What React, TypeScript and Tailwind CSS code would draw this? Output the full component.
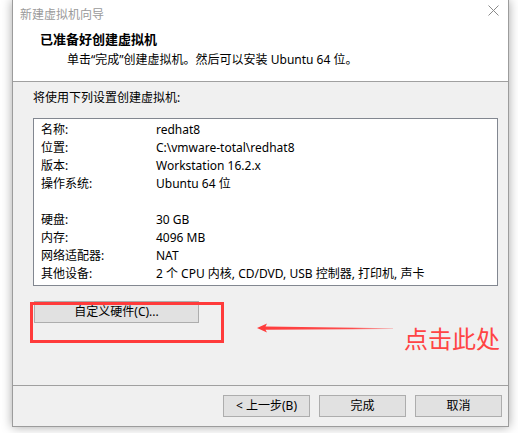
import React from 'react';

const FONT = { fontFamily: '"Noto Sans", "Noto Sans CJK SC", sans-serif' };

const settings: [string, string][] = [
  ['名称:', 'redhat8'],
  ['位置:', 'C:\\vmware-total\\redhat8'],
  ['版本:', 'Workstation 16.2.x'],
  ['操作系统:', 'Ubuntu 64 位'],
  ['', ''],
  ['硬盘:', '30 GB'],
  ['内存:', '4096 MB'],
  ['网络适配器:', 'NAT'],
  ['其他设备:', '2 个 CPU 内核, CD/DVD, USB 控制器, 打印机, 声卡'],
];

const WinButton: React.FC<{ label: string; className?: string }> = ({ label, className = '' }) => (
  <button
    className={`h-[22px] bg-[#e1e1e1] border border-[#adadad] text-[12px] leading-none text-black flex items-center justify-center ${className}`}
  >
    {label}
  </button>
);

const App: React.FC = () => {
  return (
    <div className="relative w-[518px] h-[433px] bg-white overflow-hidden" style={FONT}>
      {/* wizard window */}
      <div className="ml-[12px] w-[497px] h-[427px] flex flex-col bg-[#f0f0f0] border-l border-r border-b border-[#9c9c9c] shadow-[0_0_10px_rgba(0,0,0,0.35)]">
        <div className="bg-white h-[82px] border-b border-[#a0a0a0] flex flex-col">
          <div className="h-[30px] flex items-center justify-between pl-[7px] pr-[9px]">
            <span className="text-[12px] text-[#9a9a9a] -mt-[1px]">新建虚拟机向导</span>
            <svg width="11" height="11" viewBox="0 0 11 11" className="-mt-[10px]">
              <path d="M0.5 0.5 L10.5 10.5 M10.5 0.5 L0.5 10.5" stroke="#8a8a8a" strokeWidth="1" fill="none" />
            </svg>
          </div>
          <div className="h-[20px] pl-[27px] flex items-center text-[13px] font-bold text-black">已准备好创建虚拟机</div>
          <div className="h-[20px] pl-[54px] flex items-center text-[12px] text-black">
            单击“完成”创建虚拟机。然后可以安装 Ubuntu 64 位。
          </div>
        </div>

        <div className="flex-1 flex flex-col">
          <div className="pl-[20px] pt-[8px] h-[24px] flex items-center text-[12px] text-black">将使用下列设置创建虚拟机:</div>
          <div className="ml-[20px] mt-[12px] w-[465px] h-[168px] bg-white border border-[#828790] pt-[2px] pl-[7px]">
            {settings.map(([k, v], i) => (
              <div key={i} className="h-[18px] flex items-center text-[12px] text-black">
                <span className="w-[115px]">{k}</span>
                <span>{v}</span>
              </div>
            ))}
          </div>
          <WinButton label="自定义硬件(C)..." className="ml-[21px] mt-[15px] w-[165px]" />
        </div>

        <div className="h-[41px] border-t border-[#a0a0a0] flex items-start justify-end gap-[9px] pt-[9px] pr-[6px]">
          <WinButton label="< 上一步(B)" className="w-[87px]" />
          <WinButton label="完成" className="w-[87px]" />
          <WinButton label="取消" className="w-[87px]" />
        </div>
      </div>

      {/* annotation */}
      <div className="absolute left-[30px] top-[302px] w-[194px] h-[41px] border-[3px] border-[#ff3b3b]" />
      <svg className="absolute left-[255px] top-[320px]" width="140" height="16" viewBox="0 0 140 16">
        <defs>
          <linearGradient id="fade" x1="0" x2="1" y1="0" y2="0">
            <stop offset="0" stopColor="#ff3b3b" stopOpacity="1" />
            <stop offset="0.7" stopColor="#ff3b3b" stopOpacity="0.9" />
            <stop offset="1" stopColor="#ff3b3b" stopOpacity="0.3" />
          </linearGradient>
        </defs>
        <polygon points="2,8 12,3.5 10.5,6.6 138,8.2 138,9 10.5,9.8 12,12.6" fill="url(#fade)" />
      </svg>
      <div className="absolute left-[404px] top-[327px] text-[24px] leading-none text-[#ff4444]">点击此处</div>
    </div>
  );
};

export default App;
